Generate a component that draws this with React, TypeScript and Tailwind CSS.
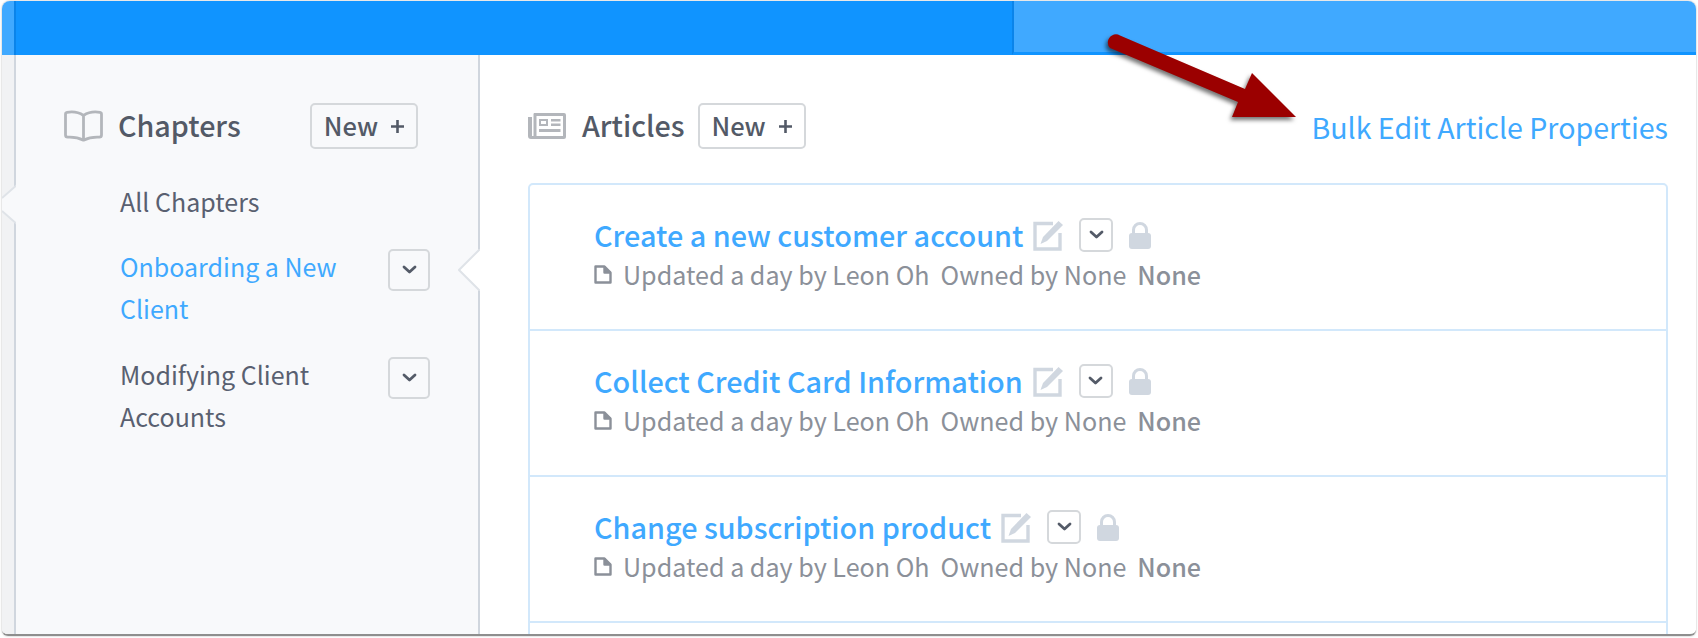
import React from "react";

const Chevron = () => (
  <svg width="15" height="10" viewBox="0 0 15 10" fill="none" stroke="#545b68" strokeWidth="2.8" strokeLinecap="round" strokeLinejoin="round">
    <path d="M2 2l5.500 5L13 2" />
  </svg>
);

const ChevronButton = ({ small }: { small?: boolean }) => (
  <button className={small ? "flex h-[34px] w-[34px] items-center justify-center rounded-[5px] border-2 border-[#d5d8db] bg-white" : "mt-[4px] flex h-[42px] w-[42px] shrink-0 items-center justify-center rounded-[5px] border-2 border-[#d5d8db]"}>
    <Chevron />
  </button>
);

const NewButton = () => (
  <button className="flex h-[46px] w-[108px] items-center justify-center gap-[12px] rounded-[5px] border-2 border-[#d5d8db] pl-px text-[25.500px] font-medium leading-none text-[#535a67]">
    <span className="pb-[2px]">New</span>
    <svg width="15" height="15" viewBox="0 0 15 15" stroke="#535a67" strokeWidth="2.6"><path d="M7.500 1v13M1 7.500h13" /></svg>
  </button>
);

const BookIcon = () => (
  <svg width="39" height="32" viewBox="0 0 39 32" fill="none" stroke="#b3b6bb" strokeWidth="2.800" strokeLinejoin="round">
    <path d="M19.500 5.500C15 2.500 8 1.500 3 2.400 2 2.600 1.500 3.400 1.500 4.400V25c0 1.300 1 2.200 2.200 2.200 5.500-.3 11 .6 15.800 3 4.800-2.400 10.300-3.300 15.800-3 1.200 0 2.200-.9 2.200-2.200V4.400c0-1-.5-1.800-1.500-2C31 1.500 24 2.500 19.500 5.500zM19.500 5.500v24.500" />
  </svg>
);

const NewsIcon = () => (
  <svg width="38" height="26" viewBox="0 0 38 26" fill="#b3b6bb">
    <path fillRule="evenodd" d="M6 0h30a2 2 0 0 1 2 2v22a2 2 0 0 1-2 2H3a3 3 0 0 1-3-3V4h4v19h1.500V1z M8.500 3v20h26.500V3z" />
    <path fillRule="evenodd" d="M11 6h9v7h-9z M13 8v3h5V8z" />
    <path d="M23 6h9.500v2.500H23zM23 10.500h9.500V13H23zM11 16h21.500v3H11z" />
  </svg>
);

const EditIcon = () => (
  <svg width="31" height="31" viewBox="0 0 31 31" fill="none">
    <path d="M20 3.500H2v25.500h25V13" stroke="#d0d7e0" strokeWidth="3.400" />
    <path d="M25.500 1l4.500 4L14 21l-6.500 3 2.500-7z" fill="#d0d7e0" />
  </svg>
);

const LockIcon = () => (
  <svg width="22" height="27" viewBox="0 0 22 27">
    <path d="M4.500 13V8a6.500 6.500 0 0 1 13 0v3" fill="none" stroke="#d0d7e0" strokeWidth="3" />
    <rect x="0" y="11" width="22" height="16" rx="3" fill="#d0d7e0" />
  </svg>
);

const FileIcon = () => (
  <svg width="18" height="19" viewBox="0 0 18 19" fill="none" stroke="#8b9099" strokeWidth="2.400" strokeLinejoin="round">
    <path d="M1.500 1.500h9l6 6v10h-15z" />
    <path d="M10.500 1.500v6h6" fill="#8b9099" />
  </svg>
);

const articles = ["Create a new customer account", "Collect Credit Card Information", "Change subscription product"];

const Row = ({ title }: { title: string }) => (
  <div className="h-[146px] border-b-2 border-[#d2e8fb] pl-[64px] pt-[30px]">
    <div className="flex h-[40px] items-center">
      <a className="text-[28.800px] font-medium leading-[40px] text-[#3fa9ff]">{title}</a>
      <span className="ml-[10px] flex items-center"><EditIcon /></span>
      <span className="ml-[15px] flex items-center"><ChevronButton small /></span>
      <span className="ml-[16px] flex items-center"><LockIcon /></span>
    </div>
    <div className="mt-[1px] flex h-[36px] items-center text-[25.100px] leading-[36px] text-[#8b9099]">
      <FileIcon />
      <span className="ml-[11px]">Updated a day by Leon Oh</span>
      <span className="ml-[11px]">Owned by None</span>
      <span className="ml-[11px] font-medium">None</span>
    </div>
  </div>
);

export default function App() {
  return (
    <div className="relative h-[638px] w-[1698px] overflow-hidden bg-white pl-[2px] pr-[2px] pt-px font-['Noto_Sans_CJK_SC','Noto_Sans',sans-serif]">
      <div className="flex h-[635px] flex-col overflow-hidden rounded-b-[6px] rounded-t-[8px] border-b-2 border-[#8e8e8e] shadow-[0_0_2px_rgba(0,0,0,0.35)]">
        <header className="flex h-[54px] shrink-0">
          <div className="w-[14px] border-r-2 border-[#0a84ea] bg-[#40a9ff]" />
          <div className="flex-1 bg-[#1094ff]" />
          <div className="h-[54px] w-[684px] border-b-[3px] border-l-2 border-b-[#1094ff] border-l-[#0a84ea] bg-[#40a9ff]" />
        </header>
        <div className="flex min-h-0 flex-1">
          <div className="relative w-[14px] shrink-0 border-r-2 border-[#d0d6de] bg-[#f1f2f4]">
            <svg className="absolute left-0 top-[129px]" width="16" height="41" viewBox="0 0 16 41">
              <path d="M16 0L0 14v13l16 14z" fill="#f8f9fb" />
              <path d="M16 0L0 14M0 27l16 14" stroke="#dfe3e8" strokeWidth="2" fill="none" />
            </svg>
          </div>
          <aside className="relative w-[464px] shrink-0 border-r-2 border-[#d0d6de] bg-[#f8f9fb]">
            <svg className="absolute right-[-2px] top-[194px]" width="22" height="42" viewBox="0 0 22 42">
              <path d="M22 0L1 21l21 21z" fill="#fff" />
              <path d="M22 0L1 21l21 21" stroke="#dfe3e8" strokeWidth="2" fill="none" />
            </svg>
            <div className="flex items-center pl-[48px] pt-[48px]">
              <BookIcon />
              <h2 className="ml-[15px] w-[192px] pb-[2px] text-[28.700px] font-medium leading-[44px] text-[#535a67]">Chapters</h2>
              <NewButton />
            </div>
            <nav className="pl-[104px] pr-[48px] pt-[31px] text-[25px] leading-[42px] text-[#596070]">
              <div>All Chapters</div>
              <div className="mt-[23px] flex justify-between">
                <div className="w-[230px] text-[#3fa9ff]">Onboarding a New Client</div>
                <ChevronButton />
              </div>
              <div className="mt-[24px] flex justify-between">
                <div className="w-[230px]">Modifying Client Accounts</div>
                <ChevronButton />
              </div>
            </nav>
          </aside>
          <main className="min-w-0 flex-1 pl-[48px] pr-[28px] pt-[48px]">
            <div className="flex h-[46px] items-center">
              <NewsIcon />
              <h2 className="ml-[16px] mr-[13px] pb-[2px] text-[28.700px] font-medium leading-[44px] text-[#535a67]">Articles</h2>
              <NewButton />
              <a className="ml-auto pt-[2px] text-[28.600px] leading-[44px] text-[#3fa9ff]">Bulk Edit Article Properties</a>
            </div>
            <div className="mt-[34px] h-[560px] rounded-t-[5px] border-2 border-[#d2e8fb]">
              {articles.map((t) => <Row key={t} title={t} />)}
            </div>
          </main>
        </div>
      </div>
      <svg className="absolute left-[1100px] top-[25px] drop-shadow-[-2px_3px_2px_rgba(0,0,0,0.55)]" width="210" height="105" viewBox="1100 25 210 105">
        <path d="M1112 35.500a8 8 0 0 0-2 12.500L1238 102l-6 15h64l-44-44-7 16L1120 35.500a8 8 0 0 0-8 0z" fill="#9b0000" />
      </svg>
    </div>
  );
}
